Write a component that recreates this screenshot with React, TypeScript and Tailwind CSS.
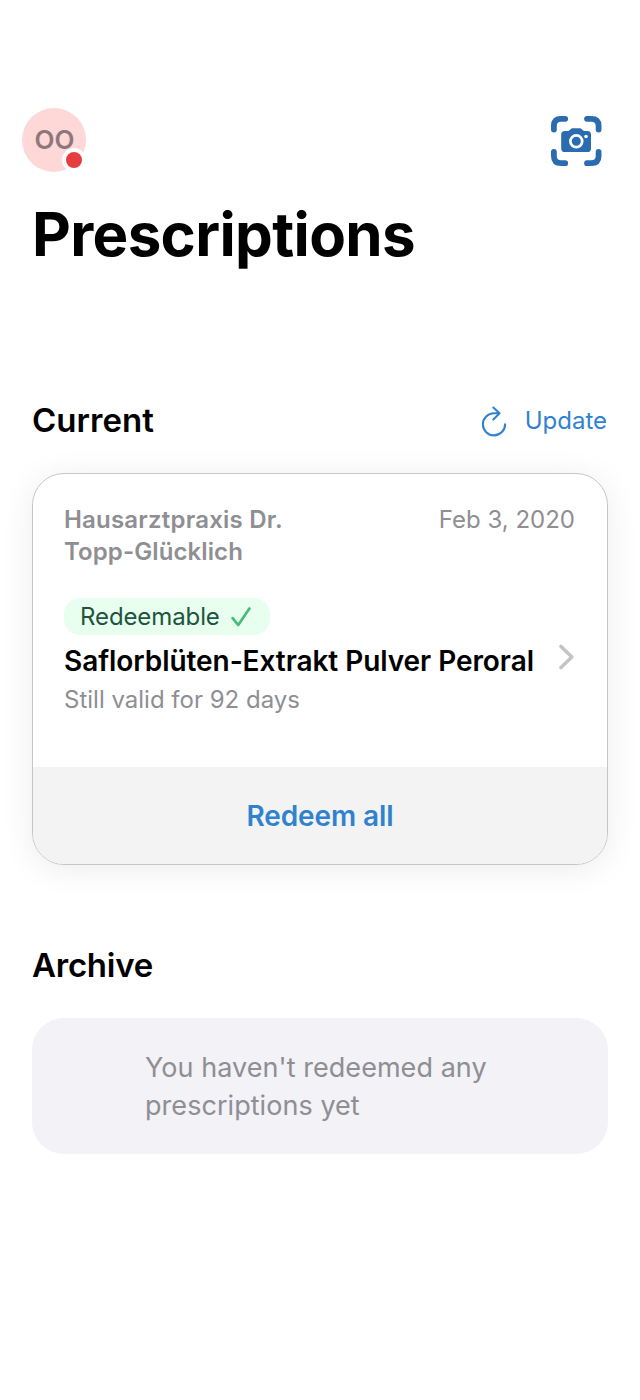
function ScanIcon() {
  return (
    <svg className="mt-[7px] h-[52px] w-[52px]" viewBox="0 0 52 52" fill="none">
      <path
        d="M3.9 14.5V10.8Q3.9 3.8 11 3.8H15.2M37 3.8H41.2Q48.6 3.8 48.6 10.8V14.5M48.6 37V41Q48.6 48.2 41.2 48.2H37M15.2 48.2H11Q3.9 48.2 3.9 41V37"
        stroke="#2b6cb0"
        strokeWidth="5.8"
        strokeLinecap="round"
      />
      <path
        d="M15 16H18.2C19.6 16 20.4 13.2 22.4 13.2H30C32 13.2 32.8 16 34.2 16H37.4Q41 16 41 19.6V33.4Q41 37 37.4 37H15Q11.2 37 11.2 33.4V19.6Q11.2 16 15 16Z"
        fill="#2b6cb0"
      />
      <circle cx="26.3" cy="26.3" r="5.9" stroke="white" strokeWidth="2.7" />
      <circle cx="36" cy="21.5" r="1.8" fill="white" />
    </svg>
  );
}

function RefreshIcon() {
  return (
    <svg className="mt-[3px] h-8 w-7" viewBox="0 0 28 32" fill="none" stroke="#3182ce" strokeWidth="2.1" strokeLinecap="round" strokeLinejoin="round">
      <path d="M25.1 18.2A11.1 11.1 0 1 1 14 7.2H19.6M13.3 1.5L19.6 7.3L13.3 13.5" />
    </svg>
  );
}

export default function App() {
  return (
    <main className="flex min-h-[1400px] w-[640px] flex-col bg-white font-['Inter',sans-serif] text-black">
      <header className="flex items-start justify-between pt-[108px] pr-[38px] pl-[22px]">
        <div className="relative flex h-16 w-16 items-center justify-center rounded-full bg-[#fed7d7] pl-px text-[26px] leading-8 font-semibold text-[#8e777b]">
          OO
          <span className="absolute right-0 bottom-0 h-6 w-6 rounded-full border-4 border-white bg-[#e53e3e]" />
        </div>
        <ScanIcon />
      </header>
      <h1 className="mt-[26px] ml-8 text-[60px] leading-[72px] font-bold tracking-[-0.65px]">Prescriptions</h1>
      <section className="px-8 pt-[126px]">
        <div className="flex h-12 items-center justify-between">
          <h2 className="mt-0.5 text-[33px] font-semibold tracking-[0.05px]">Current</h2>
          <span className="flex items-center text-2xl text-[#3182ce]">
            <RefreshIcon />
            <span className="mt-0.5 mr-px ml-[17px]">Update</span>
          </span>
        </div>
        <div className="mt-[29px] flex h-[392px] flex-col overflow-hidden rounded-[32px] border border-[#c6c6c8] shadow-[0_4px_32px_rgba(0,0,0,0.08)]">
          <div className="flex justify-between pt-[30px] pr-8 pl-[31px] text-2xl leading-8 text-[#8e8e93]">
            <p className="w-[240px] font-semibold tracking-[0.2px]">
              Hausarztpraxis Dr. <span className="tracking-[0.1px]">Topp-Glücklich</span>
            </p>
            <span>Feb 3, 2020</span>
          </div>
          <div className="mt-[30px] ml-[31px] flex h-[37px] w-[206px] items-center rounded-2xl bg-[#e8fff0] pl-4 text-2xl text-[#22543d]">
            <span className="tracking-[-0.1px]">Redeemable</span>
            <svg className="ml-[11px] h-5 w-5" viewBox="0 0 20 20" fill="none" stroke="#48bb78" strokeWidth="2.7" strokeLinecap="round" strokeLinejoin="round">
              <path d="M1.6 11.2L7.2 18L18.4 1.5" />
            </svg>
          </div>
          <div className="mt-2 flex items-center pl-[31px]">
            <h3 className="w-[494px] text-[28px] leading-9 font-semibold tracking-[-0.06px]">Saflorblüten-Extrakt Pulver Peroral</h3>
            <svg className="-mt-2 h-7 w-4 shrink-0" viewBox="0 0 16 28" fill="none" stroke="#c4c4c6" strokeWidth="3.5" strokeLinecap="round" strokeLinejoin="round">
              <path d="M3 3.4L13.8 14L3 24.6" />
            </svg>
          </div>
          <p className="mt-[5px] ml-[31px] text-2xl text-[#8e8e93]">Still valid for 92 days</p>
          <button className="mt-auto h-[97px] bg-[#f3f3f3] text-[28px] font-semibold tracking-[-0.1px] text-[#3182ce]">Redeem all</button>
        </div>
      </section>
      <section className="px-8 pt-[76px]">
        <h2 className="text-[33px] leading-12 font-semibold tracking-[-0.25px]">Archive</h2>
        <div className="mt-[29px] flex h-[136px] items-center rounded-[32px] bg-[#f2f2f7] pt-px pl-[113px] text-[27px] leading-[38px] tracking-[0.05px] text-[#8e8e93]">
          <p className="w-[360px]">You haven't redeemed any prescriptions yet</p>
        </div>
      </section>
    </main>
  );
}
